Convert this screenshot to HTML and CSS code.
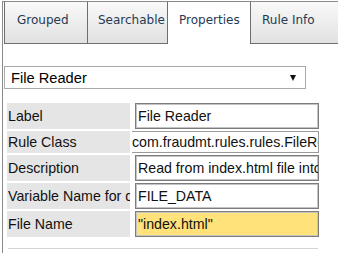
FILE: index.html
```html
<!DOCTYPE html>
<html>
<head>
<meta charset="utf-8">
<link rel="stylesheet" href="styles.css">
</head>
<body>
<div class="panel">
  <div class="tabs">
    <div class="tab t1">Grouped</div>
    <div class="tab t2">Searchable</div>
    <div class="tab t3 active">Properties</div>
    <div class="tab t4">Rule Info</div>
  </div>
  <div class="content">
    <div class="select"><span class="sel-text">File Reader</span><span class="arrow"></span></div>
    <div class="props">
      <div class="lbl">Label</div>
      <div class="val"><div class="inp">File Reader</div></div>
      <div class="lbl short">Rule Class</div>
      <div class="val"><div class="ro">com.fraudmt.rules.rules.FileReader</div></div>
      <div class="lbl">Description</div>
      <div class="val"><div class="inp">Read from index.html file into FILE_DATA</div></div>
      <div class="lbl">Variable Name for data</div>
      <div class="val"><div class="inp">FILE_DATA</div></div>
      <div class="lbl">File Name</div>
      <div class="val"><div class="inp hl">"index.html"</div></div>
    </div>
    <div class="bottom"></div>
  </div>
</div>
</body>
</html>
```

FILE: styles.css
```css
html, body {
  margin: 0;
  padding: 0;
  background: #ffffff;
  overflow: hidden;
}
body {
  width: 338px;
  height: 253px;
  font-family: "Liberation Sans", Arial, sans-serif;
}
.panel {
  margin: 1px 0 0 2px;
  border-left: 1px solid #8a8a8a;
  border-top: 1px solid #8a8a8a;
  height: 260px;
}
.tabs {
  display: flex;
  margin-left: 1px;
  height: 42px;
}
.tab {
  box-sizing: border-box;
  height: 42px;
  padding: 10px 0 0 11px;
  line-height: 16px;
  font-family: "DejaVu Sans", Verdana, sans-serif;
  font-size: 12px;
  color: #243a52;
  white-space: nowrap;
  overflow: hidden;
  background: linear-gradient(#f9f9f9, #e1e1e1);
  border-right: 1px solid #6e6e6e;
  border-bottom: 1px solid #6e6e6e;
}
.t1 { width: 84px; border-left: 1px solid #6e6e6e; padding-left: 12px; }
.t2 { width: 80px; padding-left: 10px; }
.t3 { width: 83px; }
.t4 { flex: 1; border-right: none; }
.tab.active {
  background: #ffffff;
  border-bottom: none;
}
.content {
  padding: 22px 0 0 1px;
}
.select {
  box-sizing: border-box;
  width: 302px;
  height: 23px;
  border: 1px solid #a9a9a9;
  display: flex;
  align-items: center;
  justify-content: space-between;
  padding: 0 9px 0 6px;
  font-size: 14.67px;
  color: #000;
}
.arrow {
  width: 0;
  height: 0;
  border-left: 3.5px solid transparent;
  border-right: 3.5px solid transparent;
  border-top: 6px solid #111;
}
.props {
  display: grid;
  grid-template-columns: 123px 189px;
  column-gap: 2px;
  row-gap: 2px;
  margin: 14px 0 0 3px;
  font-size: 14.2px;
}
.lbl {
  box-sizing: border-box;
  height: 26px;
  background: #e5e5e5;
  padding: 0 4px 0 1px;
  line-height: 26px;
  white-space: nowrap;
  overflow: hidden;
  color: #111;
}
.lbl.short {
  height: 22px;
  line-height: 22px;
}
.val {
  display: flex;
  align-items: center;
}
.inp {
  box-sizing: border-box;
  margin-left: 3px;
  width: 184px;
  height: 26px;
  border: 1px solid #7c7c7c;
  box-shadow: inset 0 0 0 1px #c4c4c4;
  padding: 0 2px;
  line-height: 24px;
  white-space: nowrap;
  overflow: hidden;
  color: #111;
  background: #fff;
}
.inp.hl {
  background: #ffe27a;
}
.ro {
  box-sizing: border-box;
  width: 187px;
  height: 22px;
  border: 1px solid #9a9a9a;
  border-left: none;
  line-height: 20px;
  white-space: nowrap;
  overflow: hidden;
  color: #111;
}
.bottom {
  margin: 11px 0 0 4px;
  width: 310px;
  border-top: 1px solid #d4d4d4;
  height: 10px;
}
```
